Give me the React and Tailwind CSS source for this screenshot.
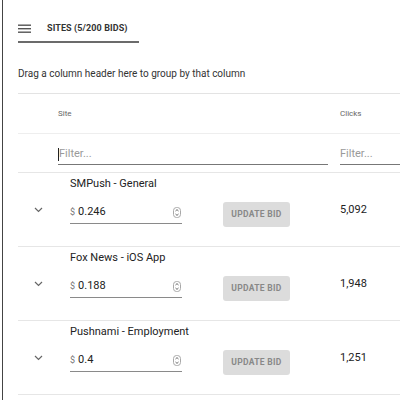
import React from 'react';

const rows = [
  { site: 'SMPush - General', bid: '0.246', clicks: '5,092' },
  { site: 'Fox News - iOS App', bid: '0.188', clicks: '1,948' },
  { site: 'Pushnami - Employment', bid: '0.4', clicks: '1,251' },
];

function Spinner() {
  return (
    <svg width="8" height="11" viewBox="0 0 8 11" className="shrink-0">
      <rect x="0.5" y="0.5" width="7" height="10" rx="3" fill="#fff" stroke="#a8a8a8" />
      <polyline points="2.5,4 4,2.6 5.5,4" fill="none" stroke="#555" strokeWidth="0.9" />
      <polyline points="2.5,7 4,8.4 5.5,7" fill="none" stroke="#555" strokeWidth="0.9" />
    </svg>
  );
}

function Chevron() {
  return (
    <svg width="9" height="6" viewBox="0 0 9 6">
      <polyline points="1,1 4.5,4.5 8,1" fill="none" stroke="#666" strokeWidth="1.2" />
    </svg>
  );
}

function BidRow({ row }) {
  return (
    <div className="flex h-[74px] border-b border-[#e6e6e6]">
      {/* expand toggle */}
      <div className="w-[40px] shrink-0 pl-[16px] pt-[34px]">
        <Chevron />
      </div>

      {/* site + bid editor */}
      <div className="w-[282px] shrink-0 pl-[12px] pt-[4px] flex flex-col">
        <div className="text-[11px] leading-[14px] text-[#222]">{row.site}</div>
        <div className="flex items-start mt-[10px]">
          <div className="w-[112px] h-[23px] flex items-center border-b border-[#8a8a8a]">
            <span className="text-[9px] text-[#777] mr-[3px] mt-[2px]">$</span>
            <span className="text-[11px] text-[#222] flex-1">{row.bid}</span>
            <div className="mr-[1px]">
              <Spinner />
            </div>
          </div>
          <button className="ml-[41px] mt-[1px] w-[67px] h-[25px] rounded-[3px] bg-[#dcdcdc] text-[8.5px] font-bold tracking-[0.3px] text-[#888]">
            UPDATE BID
          </button>
        </div>
      </div>

      {/* clicks */}
      <div className="pt-[30px] text-[11px] leading-[14px] text-[#222]">{row.clicks}</div>
    </div>
  );
}

export default function App() {
  return (
    <div
      className="w-[400px] h-[400px] overflow-hidden bg-white"
      style={{ fontFamily: 'Roboto, "Liberation Sans", sans-serif' }}
    >
      <div className="ml-[2px] h-full border-l border-[#444] pl-[15px]">
        {/* === TAB HEADER === */}
        <div className="pt-[23px] w-[121px] border-b-2 border-[#6b6b6b] pb-[7px]">
          <div className="flex items-center h-[11px]">
            <svg width="14" height="10" viewBox="0 0 14 10" className="shrink-0">
              <rect x="0" y="0.5" width="13" height="1.4" fill="#555" />
              <rect x="0" y="4" width="13" height="1.4" fill="#555" />
              <rect x="0" y="7.5" width="13" height="1.4" fill="#555" />
            </svg>
            <span className="ml-[15px] text-[9px] font-bold text-[#333] tracking-[0.1px]">
              SITES (5/200 BIDS)
            </span>
          </div>
        </div>

        {/* === GROUP PANEL === */}
        <div className="h-[51px] border-b border-[#e3e3e3] pt-[25px] text-[10px] leading-[12px] text-[#333]">
          Drag a column header here to group by that column
        </div>

        {/* === COLUMN HEADERS === */}
        <div className="flex h-[40px] items-center border-b border-[#eeeeee] text-[8px] text-[#666]">
          <div className="w-[40px] shrink-0" />
          <div className="w-[282px] shrink-0">Site</div>
          <div>Clicks</div>
        </div>

        {/* === FILTER ROW === */}
        <div className="flex h-[39px] border-b border-[#e6e6e6]">
          <div className="w-[40px] shrink-0" />
          <div className="w-[270px] shrink-0 h-[31px] border-b border-[#777] flex items-end pb-[4px]">
            <div className="w-px h-[13px] bg-[#222] mb-[-1px]" />
            <span className="text-[11px] leading-[13px] text-[#9a9a9a]">Filter...</span>
          </div>
          <div className="w-[12px] shrink-0" />
          <div className="flex-1 h-[31px] border-b border-[#777] flex items-end pb-[4px]">
            <span className="text-[11px] leading-[13px] text-[#9a9a9a]">Filter...</span>
          </div>
        </div>

        {/* === ROWS === */}
        {rows.map((row) => (
          <BidRow key={row.site} row={row} />
        ))}
      </div>
    </div>
  );
}
